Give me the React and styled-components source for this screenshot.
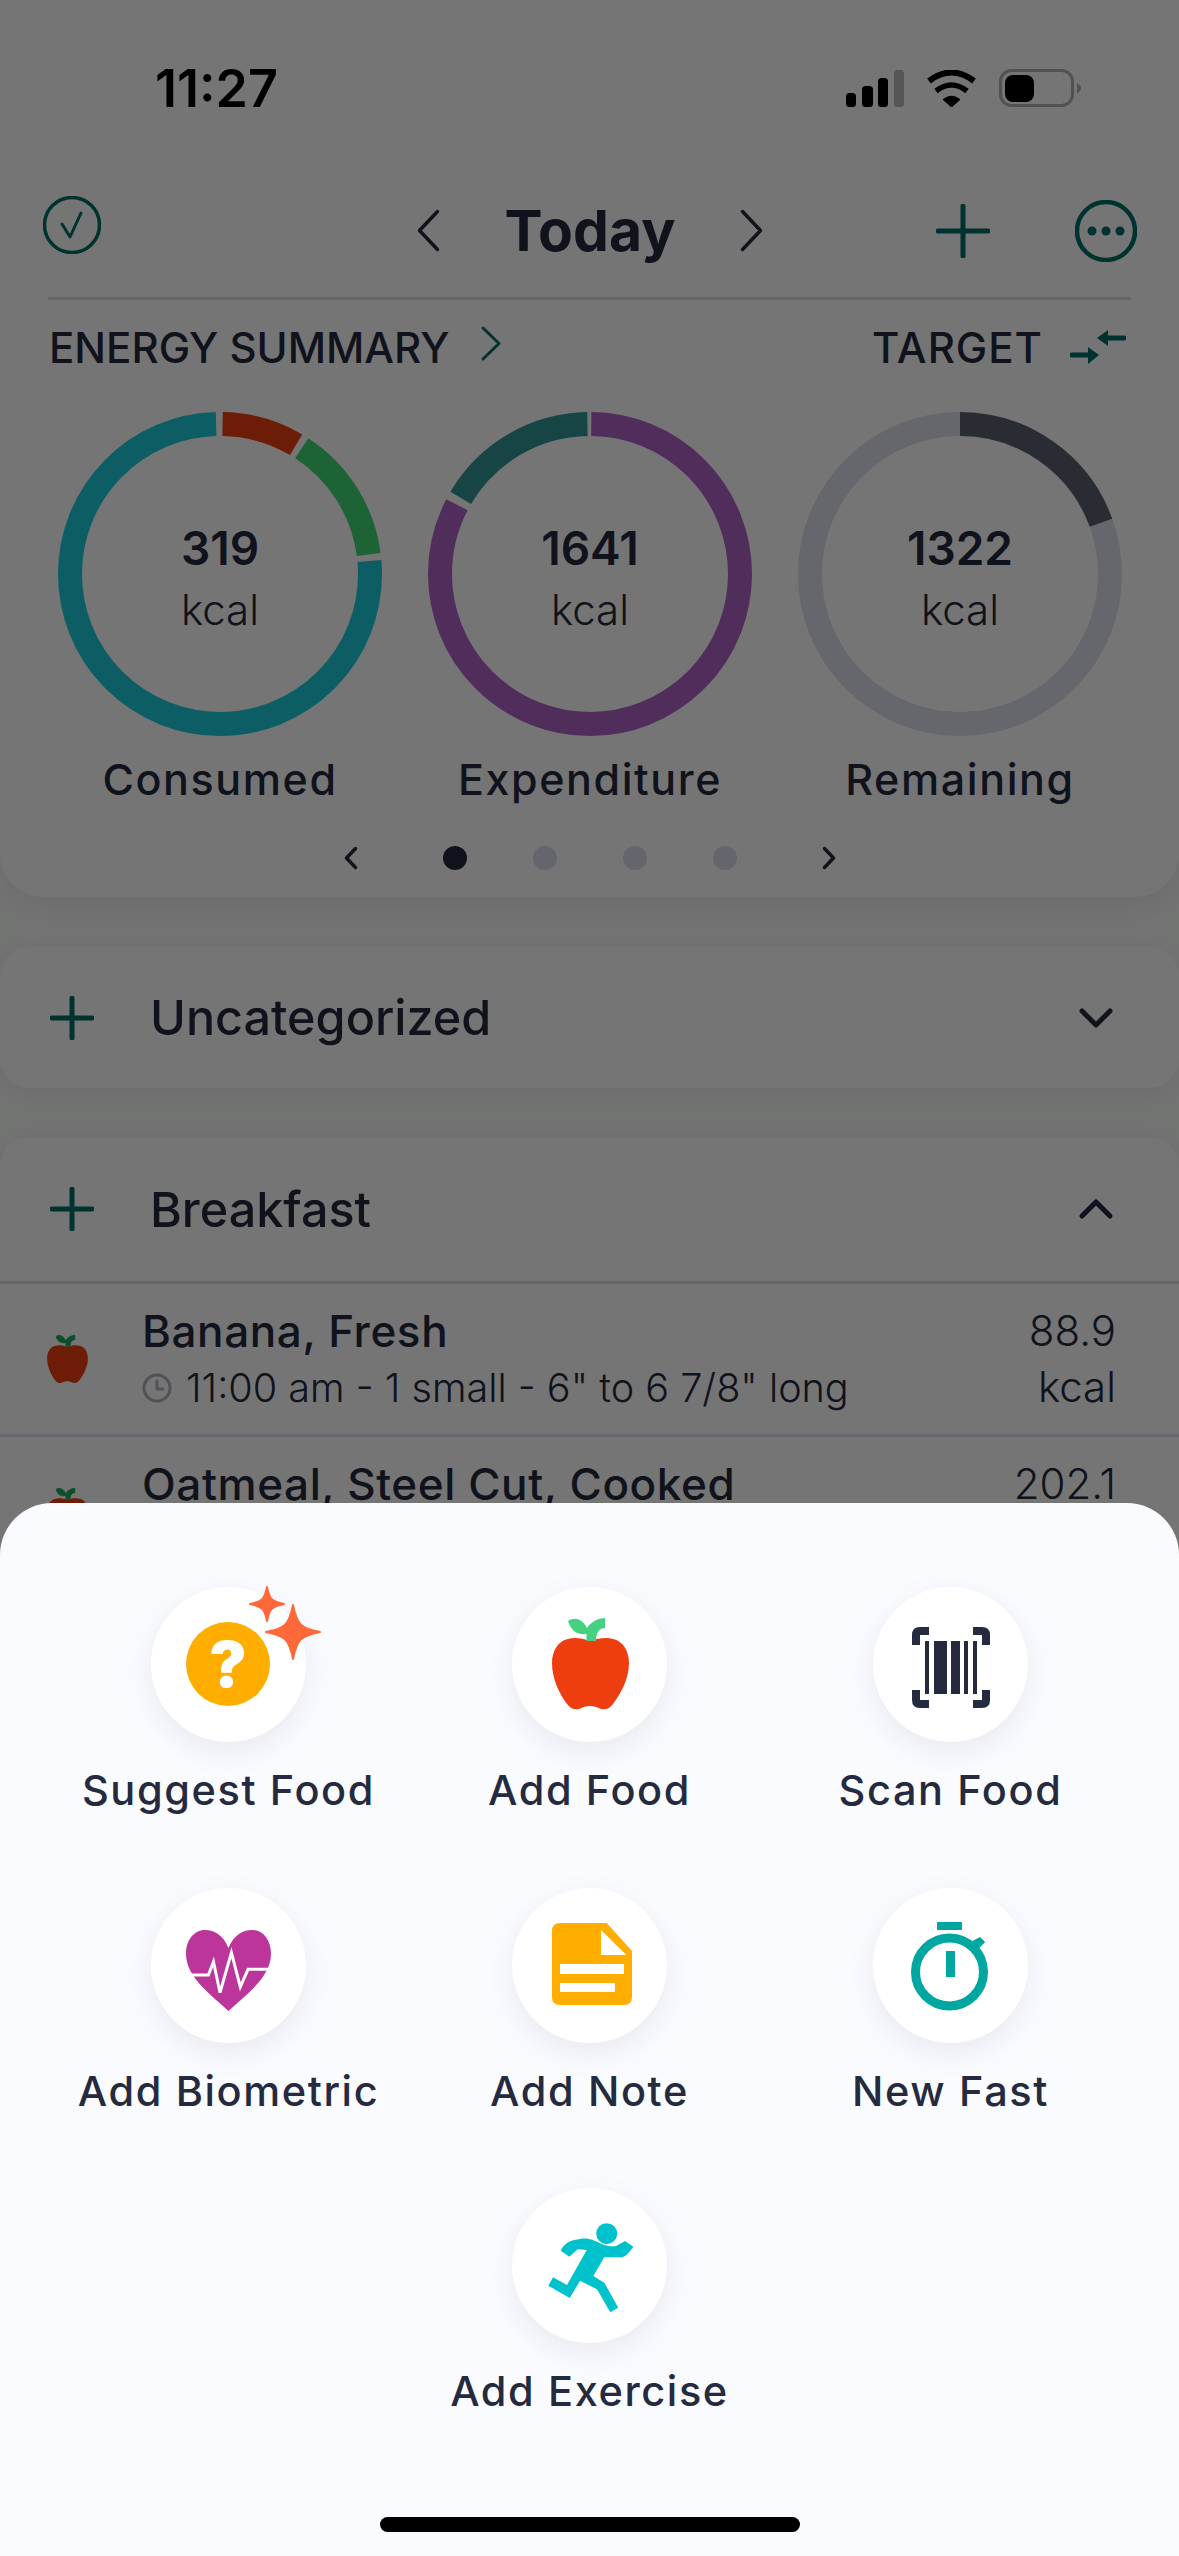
import React from "react";
import styled, { createGlobalStyle } from "styled-components";

const INK = "#252a3e";
const DEEP = "#006f6a";
const LINE = "#dcdced";

const GlobalStyle = createGlobalStyle`
  html, body {
    margin: 0;
    padding: 0;
    background: #fff;
  }
  * {
    box-sizing: border-box;
  }
`;

const Screen = styled.div`
  position: relative;
  width: 1179px;
  height: 2556px;
  overflow: hidden;
  background: #f9fcf9;
  font-family: Inter, "Liberation Sans", sans-serif;
  color: ${INK};
`;

const Backdrop = styled.div`
  position: absolute;
  inset: 0;
  background: rgba(0, 0, 0, 0.54);
`;

const SummaryCard = styled.section`
  background: #fff;
  border-radius: 0 0 44px 44px;
  padding-bottom: 15px;
  box-shadow: 0 6px 30px rgba(0, 0, 0, 0.08);
`;

const StatusBar = styled.div`
  display: flex;
  align-items: center;
  justify-content: space-between;
  height: 176px;
  padding: 0 98px 0 155px;
`;

const Clock = styled.span`
  font-size: 52px;
  font-weight: 600;
  color: #000;
`;

const StatusIcons = styled.div`
  display: flex;
  align-items: center;
  gap: 22px;
`;

const NavBar = styled.nav`
  display: grid;
  grid-template-columns: 1fr auto 1fr;
  align-items: center;
  height: 121px;
  padding: 0 42px 12px 43px;
`;

const NavCenter = styled.div`
  display: flex;
  align-items: center;
  gap: 64px;
`;

const NavRight = styled.div`
  display: flex;
  align-items: center;
  justify-content: flex-end;
  gap: 85px;
`;

const Today = styled.h1`
  margin: 0;
  font-size: 57px;
  font-weight: 700;
  line-height: 60px;
`;

const Divider = styled.div`
  height: 3px;
  margin: 0 48px;
  background: ${LINE};
`;

const SummaryRow = styled.div`
  display: flex;
  align-items: center;
  justify-content: space-between;
  height: 94px;
  padding: 0 53px 0 49px;
`;

const SummaryGroup = styled.div`
  display: flex;
  align-items: center;
  gap: ${(p) => p.$gap}px;

  svg:first-of-type {
    margin-top: ${(p) => p.$lift || 0}px;
  }
`;

const SummaryTitle = styled.span`
  font-size: 42px;
  font-weight: 500;
  letter-spacing: ${(p) => p.$spacing || 0}px;
`;

const Rings = styled.div`
  display: grid;
  grid-template-columns: repeat(3, 370px);
  padding: 18px 0 0 35px;
`;

const RingItem = styled.div`
  display: flex;
  flex-direction: column;
  align-items: center;
`;

const RingBox = styled.div`
  position: relative;
  width: 324px;
  height: 324px;
`;

const RingText = styled.div`
  position: absolute;
  inset: 0;
  display: flex;
  flex-direction: column;
  align-items: center;
  justify-content: center;
  padding-top: 10px;
`;

const RingValue = styled.span`
  font-size: 46px;
  font-weight: 600;
  line-height: 62px;
`;

const RingUnit = styled.span`
  font-size: 42px;
  font-weight: 300;
  line-height: 62px;
`;

const RingLabel = styled.span`
  margin-top: 18px;
  font-size: 43px;
  font-weight: 500;
  line-height: 50px;
  letter-spacing: 1.6px;
`;

const Pager = styled.div`
  display: flex;
  align-items: center;
  justify-content: center;
  gap: 84px;
  height: 48px;
  margin-top: 30px;
`;

const Dots = styled.div`
  display: flex;
  gap: 66px;
`;

const Dot = styled.span`
  width: 24px;
  height: 24px;
  border-radius: 50%;
  background: ${(p) => (p.$active ? INK : LINE)};
`;

const MealCard = styled.section`
  margin-top: ${(p) => p.$top}px;
  background: #fff;
  border-radius: 30px;
  box-shadow: 0 4px 24px rgba(0, 0, 0, 0.07);
`;

const MealHeader = styled.div`
  display: flex;
  align-items: center;
  height: ${(p) => p.$height}px;
  padding: 0 64px 0 50px;
`;

const MealTitle = styled.h2`
  flex: 1;
  margin: 0 0 0 56px;
  font-size: 48.5px;
  font-weight: 500;
`;

const FoodRow = styled.div`
  display: flex;
  align-items: center;
  height: 153px;
  padding: 0 63px 0 45px;
  border-top: 3px solid ${LINE};
`;

const FoodIcon = styled.div`
  display: flex;
  width: 97px;
`;

const FoodInfo = styled.div`
  flex: 1;
  min-height: 112px;
`;

const FoodName = styled.div`
  font-size: 44px;
  font-weight: 500;
  line-height: 56px;
  letter-spacing: 0.6px;
`;

const FoodMeta = styled.div`
  display: flex;
  align-items: center;
  gap: 14px;
  margin-top: 1px;
  font-size: 39.6px;
  font-weight: 300;
  line-height: 56px;
`;

const FoodKcal = styled.div`
  min-height: 112px;
  font-size: 42px;
  font-weight: 300;
  line-height: 56px;
  text-align: right;
`;

const Sheet = styled.div`
  position: absolute;
  left: 0;
  right: 0;
  bottom: 0;
  height: 1053px;
  padding: 84px 48px 0;
  background: #fafbff;
  border-radius: 52px 52px 0 0;
`;

const ActionGrid = styled.div`
  display: grid;
  grid-template-columns: repeat(3, 361px);
  grid-auto-rows: 300.5px;
`;

const Action = styled.div`
  display: flex;
  flex-direction: column;
  align-items: center;
  grid-column: ${(p) => p.$column || "auto"};
`;

const ActionCircle = styled.div`
  width: 155px;
  height: 155px;
  border-radius: 50%;
  background: #fff;
  box-shadow: 0 10px 30px rgba(37, 42, 62, 0.08);

  svg {
    display: block;
    overflow: visible;
  }
`;

const ActionLabel = styled.span`
  margin-top: 23px;
  font-size: 41.5px;
  font-weight: 500;
  line-height: 50px;
  letter-spacing: 1.6px;
  white-space: nowrap;
`;

const HomeBar = styled.div`
  position: absolute;
  left: 380px;
  bottom: 24px;
  width: 420px;
  height: 15px;
  border-radius: 8px;
  background: #000;
`;

const RAIL = { strokeLinecap: "round", strokeLinejoin: "round", fill: "none" };

const Chevron = ({ dir, w, h, color = INK, weight = 3.5 }) => {
  const pad = weight;
  const points = {
    left: `${w - pad} ${pad} ${pad} ${h / 2} ${w - pad} ${h - pad}`,
    right: `${pad} ${pad} ${w - pad} ${h / 2} ${pad} ${h - pad}`,
    down: `${pad} ${pad} ${w / 2} ${h - pad} ${w - pad} ${pad}`,
    up: `${pad} ${h - pad} ${w / 2} ${pad} ${w - pad} ${h - pad}`,
  }[dir];
  return (
    <svg width={w} height={h} viewBox={`0 0 ${w} ${h}`}>
      <polyline points={points} stroke={color} strokeWidth={weight} {...RAIL} />
    </svg>
  );
};

const Plus = ({ size, weight }) => (
  <svg width={size} height={size} viewBox={`0 0 ${size} ${size}`}>
    <path
      d={`M${size / 2} 2V${size - 2}M2 ${size / 2}H${size - 2}`}
      stroke={DEEP}
      strokeWidth={weight}
      {...RAIL}
    />
  </svg>
);

const Signal = () => (
  <svg width="58" height="37" viewBox="0 0 58 37">
    <rect x="0" y="23" width="10" height="14" rx="3.5" fill="#000" />
    <rect x="16" y="16" width="11" height="21" rx="3.5" fill="#000" />
    <rect x="32" y="8" width="10" height="29" rx="3.5" fill="#000" />
    <rect x="48" y="0" width="10" height="37" rx="3.5" fill="#b9b9b9" />
  </svg>
);

const Wifi = () => (
  <svg width="51" height="37" viewBox="0 0 51 37">
    <path d="M25.5 37L17 29.5Q25.5 23 34 29.5Z" fill="#000" stroke="#000" strokeWidth="1" strokeLinejoin="round" />
    <path d="M10 21Q25.5 9 41 21" stroke="#000" strokeWidth="5.5" fill="none" />
    <path d="M3 11Q25.5 -6 48 11" stroke="#000" strokeWidth="6" fill="none" />
  </svg>
);

const Battery = () => (
  <svg width="82" height="38" viewBox="0 0 82 38">
    <rect x="1.5" y="1.5" width="72" height="35" rx="11" fill="none" stroke="#b0b0b0" strokeWidth="3" />
    <rect x="6" y="6" width="29" height="27" rx="8" fill="#000" />
    <path d="M78 14C80 15 82 17 82 19C82 21 80 23 78 25Z" fill="#b0b0b0" />
  </svg>
);

const CheckCircle = () => (
  <svg width="58" height="58" viewBox="0 0 58 58" style={{ marginTop: -8 }}>
    <circle cx="29" cy="29" r="27.5" fill="none" stroke={DEEP} strokeWidth="3.5" />
    <polyline points="19 28 27 41 38 17" stroke={DEEP} strokeWidth="3" {...RAIL} />
  </svg>
);

const MoreCircle = () => (
  <svg width="62" height="62" viewBox="0 0 62 62">
    <circle cx="31" cy="31" r="29" fill="none" stroke={DEEP} strokeWidth="4.5" />
    <circle cx="17" cy="31" r="4.5" fill={DEEP} />
    <circle cx="31" cy="31" r="4.5" fill={DEEP} />
    <circle cx="45" cy="31" r="4.5" fill={DEEP} />
  </svg>
);

const SwapArrows = () => (
  <svg width="56" height="36" viewBox="0 0 56 36">
    <path d="M54 9H32M2 26H24" stroke={DEEP} strokeWidth="5" {...RAIL} />
    <path d="M27 9L38 1V17Z" fill={DEEP} />
    <path d="M29 26L18 18V35Z" fill={DEEP} />
  </svg>
);

const ClockIcon = () => (
  <svg width="30" height="30" viewBox="0 0 30 30">
    <circle cx="15" cy="15" r="13" fill="none" stroke="#b0b4c0" strokeWidth="3" />
    <polyline points="15 8 15 16 21 16" stroke="#b0b4c0" strokeWidth="3" {...RAIL} />
  </svg>
);

const AppleShape = ({ body, leaf }) => (
  <>
    <path
      d="M78 54C70 51 62 50 56 52C46 54 40 64 40 76C40 92 48 108 55 117C59 122 63 123 67 122C71 120 74 119 78 119C82 119 85 120 89 122C93 123 97 122 101 117C108 108 117 92 117 76C117 64 111 54 101 52C95 50 86 51 78 54Z"
      fill={body}
    />
    <path d="M56 34C62 30 70 31 75 41C79 35 86 31 93 31L93 41C87 41 84 46 84 54L74.5 54L74.5 47C65 48 59 44 56 34Z" fill={leaf} />
  </>
);

const SmallApple = () => (
  <svg width="45" height="52" viewBox="36 28 85 98">
    <AppleShape body="#ee3e10" leaf="#1faa5c" />
  </svg>
);

const Sparkle = ({ x, y, r }) => {
  const k = r * 0.14;
  return (
    <path
      d={`M${x} ${y - r}C${x + k} ${y - k * 2} ${x + k * 2} ${y - k} ${x + r} ${y}C${x + k * 2} ${y + k} ${x + k} ${y + k * 2} ${x} ${y + r}C${x - k} ${y + k * 2} ${x - k * 2} ${y + k} ${x - r} ${y}C${x - k * 2} ${y - k} ${x - k} ${y - k * 2} ${x} ${y - r}Z`}
      fill="#ff6838"
      stroke="#ff6838"
      strokeWidth="2"
      strokeLinejoin="round"
    />
  );
};

const SuggestIcon = () => (
  <svg width="155" height="155" viewBox="0 0 155 155">
    <circle cx="77" cy="77" r="42" fill="#ffae00" />
    <text x="77" y="100" textAnchor="middle" fontFamily="Inter, sans-serif" fontWeight="900" fontSize="63" fill="#fff">
      ?
    </text>
    <Sparkle x={142} y={45} r={27} />
    <Sparkle x={116} y={17} r={17} />
  </svg>
);

const AddFoodIcon = () => (
  <svg width="155" height="155" viewBox="0 0 155 155">
    <AppleShape body="#ee3e10" leaf="#45d17f" />
  </svg>
);

const ScanIcon = () => (
  <svg width="155" height="155" viewBox="0 0 155 155">
    <path
      d="M56 44H47Q43 44 43 48V58M100 44H109Q113 44 113 48V58M43 103V113Q43 117 47 117H56M113 103V113Q113 117 109 117H100"
      fill="none"
      stroke={INK}
      strokeWidth="8"
    />
    <rect x="52" y="54" width="4" height="53" fill={INK} />
    <rect x="61" y="54" width="13" height="53" fill={INK} />
    <rect x="78" y="54" width="9" height="53" fill={INK} />
    <rect x="91" y="54" width="4" height="53" fill={INK} />
    <rect x="100" y="54" width="4" height="53" fill={INK} />
  </svg>
);

const BiometricIcon = () => (
  <svg width="155" height="155" viewBox="0 0 155 155">
    <path
      d="M77.5 60C72 46 62 42 54 42C43 42 35 52 35 66C35 90 62 108 77.5 123C93 108 120 90 120 66C120 52 112 42 101 42C93 42 83 46 77.5 60Z"
      fill="#bc359a"
    />
    <polyline
      points="38 87 57.4 87 62.5 73.7 69 104.7 80.4 64.7 89.3 99 97 81.3 120 81.3"
      fill="none"
      stroke="#fff"
      strokeWidth="3"
    />
  </svg>
);

const NoteIcon = () => (
  <svg width="155" height="155" viewBox="0 0 155 155">
    <path d="M48 35H94.7L120 63V109Q120 117 112 117H48Q40 117 40 109V43Q40 35 48 35Z" fill="#ffae00" />
    <path d="M89 42V67H114.5Z" fill="#fff" />
    <rect x="48" y="76" width="64" height="10" fill="#fff" />
    <rect x="48" y="95" width="55" height="9" fill="#fff" />
  </svg>
);

const FastIcon = () => (
  <svg width="155" height="155" viewBox="0 0 155 155">
    <rect x="64" y="34" width="25" height="8" fill="#00a6a0" />
    <circle cx="76.5" cy="84" r="34" fill="none" stroke="#00a6a0" strokeWidth="9" />
    <rect x="73" y="63" width="9" height="26" fill="#00a6a0" />
    <path d="M99.4 53L107 49L112.2 54L106 60.3Z" fill="#00a6a0" />
  </svg>
);

const ExerciseIcon = () => (
  <svg width="155" height="155" viewBox="0 0 155 155">
    <circle cx="94.7" cy="45.7" r="10.5" fill="#00c2cc" />
    <path
      d="M48.7 62.7C52 56 57 53 62.3 52C68 50.5 72 50 75.7 50.7C82 51.5 87 55 92.3 57C97 58.5 101 58.5 104 58L113 53L121.3 58.7C117 65 113 69.3 109 69.3L92.3 69.3L81.3 88L92.3 94.7L106.3 119.7L98.3 124.3L85 101.3L68 92.7L57.7 110L36.3 97.7L41 89.3L55 97L74.7 62L65.7 61.3L57.3 68.7Z"
      fill="#00c2cc"
    />
  </svg>
);

const RING_R = 150;

const Ring = ({ value, label, segments }) => (
  <RingItem>
    <RingBox>
      <svg width="324" height="324" viewBox="0 0 324 324">
        {segments.map(([from, to, color]) => (
          <circle
            key={from}
            cx="162"
            cy="162"
            r={RING_R}
            fill="none"
            stroke={color}
            strokeWidth="24"
            pathLength="360"
            strokeDasharray={`${to - from} 360`}
            strokeDashoffset={-from}
            transform="rotate(-90 162 162)"
          />
        ))}
      </svg>
      <RingText>
        <RingValue>{value}</RingValue>
        <RingUnit>kcal</RingUnit>
      </RingText>
    </RingBox>
    <RingLabel>{label}</RingLabel>
  </RingItem>
);

const rings = [
  {
    value: "319",
    label: "Consumed",
    segments: [
      [1, 30.5, "#ee3e10"],
      [33, 82.5, "#43d773"],
      [85, 358.5, "#1cced9"],
    ],
  },
  {
    value: "1641",
    label: "Expenditure",
    segments: [
      [0.5, 297.5, "#b062c8"],
      [300.5, 359, "#329496"],
    ],
  },
  {
    value: "1322",
    label: "Remaining",
    segments: [
      [70, 360, "#dee0eb"],
      [0, 70, "#5d606f"],
    ],
  },
];

const actions = [
  { label: "Suggest Food", Icon: SuggestIcon },
  { label: "Add Food", Icon: AddFoodIcon },
  { label: "Scan Food", Icon: ScanIcon },
  { label: "Add Biometric", Icon: BiometricIcon },
  { label: "Add Note", Icon: NoteIcon },
  { label: "New Fast", Icon: FastIcon },
  { label: "Add Exercise", Icon: ExerciseIcon, column: 2 },
];

const App = () => {
  return (
    <Screen>
      <GlobalStyle />
      <SummaryCard>
        <StatusBar>
          <Clock>11:27</Clock>
          <StatusIcons>
            <Signal />
            <Wifi />
            <Battery />
          </StatusIcons>
        </StatusBar>
        <NavBar>
          <div>
            <CheckCircle />
          </div>
          <NavCenter>
            <Chevron dir="left" w={25} h={45} />
            <Today>Today</Today>
            <Chevron dir="right" w={25} h={45} />
          </NavCenter>
          <NavRight>
            <Plus size={54} weight={5} />
            <MoreCircle />
          </NavRight>
        </NavBar>
        <Divider />
        <SummaryRow>
          <SummaryGroup $gap={31} $lift={-8}>
            <SummaryTitle>ENERGY SUMMARY</SummaryTitle>
            <Chevron dir="right" w={22} h={37} color={DEEP} weight={3} />
          </SummaryGroup>
          <SummaryGroup $gap={27}>
            <SummaryTitle $spacing={1}>TARGET</SummaryTitle>
            <SwapArrows />
          </SummaryGroup>
        </SummaryRow>
        <Rings>
          {rings.map((ring) => (
            <Ring key={ring.label} {...ring} />
          ))}
        </Rings>
        <Pager>
          <Chevron dir="left" w={16} h={26} weight={3.5} />
          <Dots>
            <Dot $active />
            <Dot />
            <Dot />
            <Dot />
          </Dots>
          <Chevron dir="right" w={16} h={26} weight={3.5} />
        </Pager>
      </SummaryCard>

      <MealCard $top={50}>
        <MealHeader $height={141}>
          <Plus size={44} weight={5} />
          <MealTitle>Uncategorized</MealTitle>
          <Chevron dir="down" w={38} h={24} weight={5} />
        </MealHeader>
      </MealCard>

      <MealCard $top={49}>
        <MealHeader $height={144}>
          <Plus size={44} weight={5} />
          <MealTitle>Breakfast</MealTitle>
          <Chevron dir="up" w={38} h={24} weight={5} />
        </MealHeader>
        <FoodRow>
          <FoodIcon>
            <SmallApple />
          </FoodIcon>
          <FoodInfo>
            <FoodName>Banana, Fresh</FoodName>
            <FoodMeta>
              <ClockIcon />
              11:00 am - 1 small - 6" to 6 7/8" long
            </FoodMeta>
          </FoodInfo>
          <FoodKcal>
            88.9
            <br />
            kcal
          </FoodKcal>
        </FoodRow>
        <FoodRow>
          <FoodIcon>
            <SmallApple />
          </FoodIcon>
          <FoodInfo>
            <FoodName>Oatmeal, Steel Cut, Cooked</FoodName>
          </FoodInfo>
          <FoodKcal>202.1</FoodKcal>
        </FoodRow>
      </MealCard>

      <Backdrop />

      <Sheet>
        <ActionGrid>
          {actions.map(({ label, Icon, column }) => (
            <Action key={label} $column={column}>
              <ActionCircle>
                <Icon />
              </ActionCircle>
              <ActionLabel>{label}</ActionLabel>
            </Action>
          ))}
        </ActionGrid>
      </Sheet>
      <HomeBar />
    </Screen>
  );
};

export default App;
